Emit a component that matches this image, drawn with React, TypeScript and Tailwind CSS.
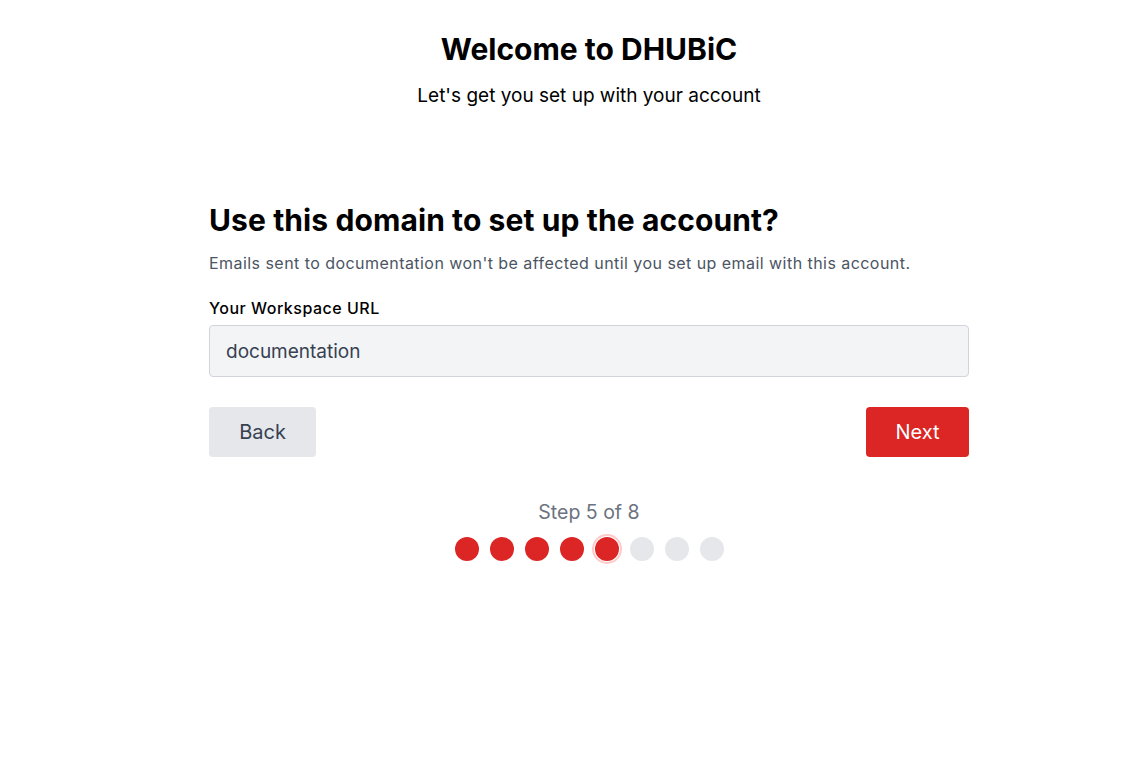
import React from 'react';

const TOTAL_STEPS = 8;
const CURRENT_STEP = 5;

const StepDots: React.FC<{ current: number; total: number }> = ({ current, total }) => (
  <div className="flex items-center justify-center gap-[11px]">
    {Array.from({ length: total }, (_, i) => {
      const n = i + 1;
      if (n === current) {
        return (
          <div
            key={n}
            className="h-6 w-6 rounded-full bg-[#dc2626] ring-2 ring-[#fecaca] ring-offset-1"
          />
        );
      }
      return (
        <div
          key={n}
          className={`h-6 w-6 rounded-full ${n < current ? 'bg-[#dc2626]' : 'bg-[#e5e7eb]'}`}
        />
      );
    })}
  </div>
);

export default function App() {
  return (
    <div
      className="min-h-screen w-full bg-white flex justify-center pl-[46px]"
      style={{ fontFamily: 'Inter, "Liberation Sans", sans-serif' }}
    >
      <div className="w-[760px] flex flex-col">
        {/* Header */}
        <div className="pt-[31px] text-center">
          <h1 className="text-[30px] font-bold leading-9 text-black">Welcome to DHUBiC</h1>
          <p className="mt-[17px] text-[19px] leading-6 text-black">Let's get you set up with your account</p>
        </div>

        {/* Domain step */}
        <div className="mt-[94px]">
          <h2 className="text-[30px] font-bold leading-9 tracking-[0.1px] text-black">
            Use this domain to set up the account?
          </h2>
          <p className="mt-[15px] text-[16px] leading-5 tracking-[0.45px] text-[#4b5563]">
            Emails sent to documentation won't be affected until you set up email with this account.
          </p>

          <label className="mt-[23px] block text-[16px] font-medium leading-6 tracking-[0.5px] text-black">
            Your Workspace URL
          </label>
          <input
            readOnly
            value="documentation"
            className="mt-[5px] block h-[52px] w-full rounded border border-[#d1d5db] bg-[#f3f4f6] px-4 text-[19px] text-[#374151] outline-none"
          />

          <div className="mt-[30px] flex items-center justify-between">
            <button className="h-[50px] w-[107px] rounded bg-[#e5e7eb] text-[20px] text-[#374151]">
              Back
            </button>
            <button className="h-[50px] w-[103px] rounded bg-[#dc2626] text-[20px] text-white">
              Next
            </button>
          </div>
        </div>

        {/* Progress */}
        <div className="mt-[43px] flex flex-col items-center gap-[13px]">
          <p className="text-[19.5px] leading-6 text-[#6b7280]">
            Step {CURRENT_STEP} of {TOTAL_STEPS}
          </p>
          <StepDots current={CURRENT_STEP} total={TOTAL_STEPS} />
        </div>
      </div>
    </div>
  );
}
